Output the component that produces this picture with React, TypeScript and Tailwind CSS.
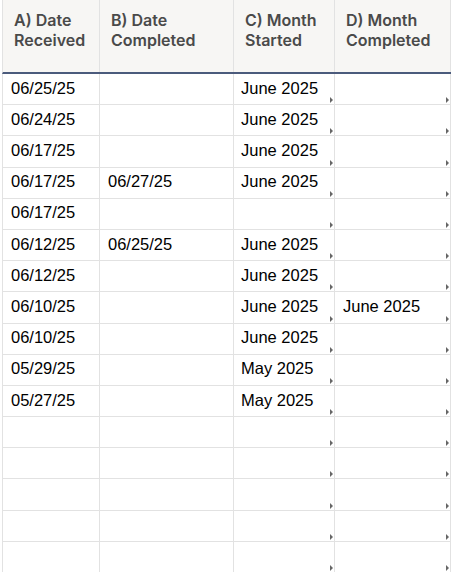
import React from "react";

const rows: [string, string, string, string][] = [
  ["06/25/25", "", "June 2025", ""],
  ["06/24/25", "", "June 2025", ""],
  ["06/17/25", "", "June 2025", ""],
  ["06/17/25", "06/27/25", "June 2025", ""],
  ["06/17/25", "", "", ""],
  ["06/12/25", "06/25/25", "June 2025", ""],
  ["06/12/25", "", "June 2025", ""],
  ["06/10/25", "", "June 2025", "June 2025"],
  ["06/10/25", "", "June 2025", ""],
  ["05/29/25", "", "May 2025", ""],
  ["05/27/25", "", "May 2025", ""],
  ["", "", "", ""],
  ["", "", "", ""],
  ["", "", "", ""],
  ["", "", "", ""],
  ["", "", "", ""],
];

const widths = ["w-[97px]", "w-[134px]", "w-[101px]", "w-[116px]"];

function Tri() {
  return (
    <span className="absolute right-[1px] bottom-[1px] w-0 h-0 border-t-[3px] border-b-[3px] border-l-[3px] border-t-transparent border-b-transparent border-l-[#666666]" />
  );
}

export default function App() {
  const headers = [
    ["A) Date", "Received"],
    ["B) Date", "Completed"],
    ["C) Month", "Started"],
    ["D) Month", "Completed"],
  ];
  return (
    <div className="w-[452px] h-[572px] bg-white overflow-hidden pl-[2px]">
      <div className="flex h-[74px] border-b-2 border-[#4b5b7c] border-l border-l-[#e2e2e2] w-[449px]">
        {headers.map((h, i) => (
          <div
            key={i}
            className={`${widths[i]} h-full bg-[#f7f6f4] border-r border-[#e2e2e2] pl-[11px] pt-[10px] text-[16px] leading-[20px] font-semibold text-[#4a4a4a]`}
            style={{ fontFamily: "Inter, 'Noto Sans', sans-serif" }}
          >
            <div>{h[0]}</div>
            <div>{h[1]}</div>
          </div>
        ))}
      </div>
      {rows.map((r, ri) => (
        <div key={ri} className="flex h-[31.2px] border-l border-[#e2e2e2]">
          {r.map((c, ci) => (
            <div
              key={ci}
              className={`${widths[ci]} relative h-full border-r border-b border-[#e2e2e2] flex items-center ${ci === 2 ? "pl-[7px]" : "pl-[8px]"} pb-[2px] text-[16.5px] text-black`}
              style={{ fontFamily: "'Liberation Sans', Arial, sans-serif" }}
            >
              {c}
              {ci >= 2 && <Tri />}
            </div>
          ))}
        </div>
      ))}
    </div>
  );
}
